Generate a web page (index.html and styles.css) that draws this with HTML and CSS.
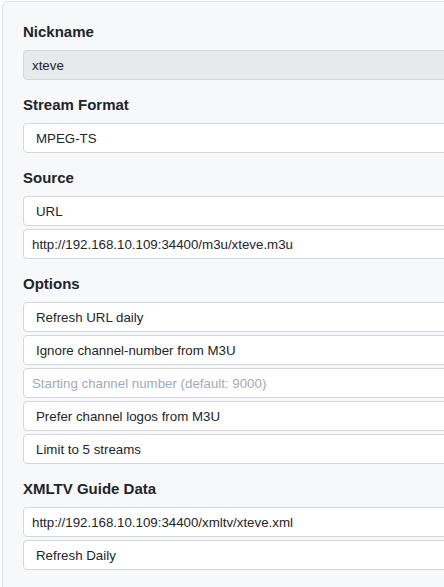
FILE: index.html
```html
<!DOCTYPE html>
<html>
<head>
<meta charset="utf-8">
<link rel="stylesheet" href="styles.css">
</head>
<body>
<div class="card">
  <div class="group">
    <label class="label">Nickname</label>
    <input class="field" type="text" value="xteve" disabled>
  </div>
  <div class="group">
    <label class="label">Stream Format</label>
    <select class="field select"><option>MPEG-TS</option></select>
  </div>
  <div class="group">
    <label class="label">Source</label>
    <select class="field select"><option>URL</option></select>
    <input class="field" type="text" value="http://192.168.10.109:34400/m3u/xteve.m3u">
  </div>
  <div class="group">
    <label class="label">Options</label>
    <select class="field select"><option>Refresh URL daily</option></select>
    <select class="field select"><option>Ignore channel-number from M3U</option></select>
    <input class="field" type="text" placeholder="Starting channel number (default: 9000)">
    <select class="field select"><option>Prefer channel logos from M3U</option></select>
    <select class="field select"><option>Limit to 5 streams</option></select>
  </div>
  <div class="group">
    <label class="label">XMLTV Guide Data</label>
    <input class="field" type="text" value="http://192.168.10.109:34400/xmltv/xteve.xml">
    <select class="field select"><option>Refresh Daily</option></select>
  </div>
</div>
</body>
</html>
```
FILE: styles.css
```css
html, body {
  margin: 0;
  padding: 0;
  overflow: hidden;
  background: #ffffff;
  font-family: "Liberation Sans", Arial, sans-serif;
  color: #212529;
}
.card {
  margin: 1px 0 0 2px;
  width: 520px;
  min-height: 640px;
  box-sizing: border-box;
  padding: 20px 20px 0 20px;
  background: #f7f8fa;
  border: 1px solid #dee2e6;
  border-radius: 6px;
  display: flex;
  flex-direction: column;
}
.group {
  display: flex;
  flex-direction: column;
  gap: 3px;
  margin-bottom: 15px;
}
.label {
  display: block;
  font-size: 15px;
  font-weight: bold;
  line-height: 20px;
  margin-bottom: 5px;
  color: #212529;
}
.field {
  display: block;
  box-sizing: border-box;
  width: 100%;
  height: 30px;
  margin: 0;
  padding: 0 8px;
  font-family: "Liberation Sans", Arial, sans-serif;
  font-size: 13.3px;
  color: #212529;
  background: #ffffff;
  border: 1px solid #d3d7dc;
  border-radius: 4px;
  outline: none;
  appearance: none;
  -webkit-appearance: none;
}
.field:disabled {
  background: #e7eaed;
  color: #212529;
  opacity: 1;
  -webkit-text-fill-color: #212529;
}
.field::placeholder {
  color: #a1abb8;
}
.select {
  padding: 0 12px;
}
```
